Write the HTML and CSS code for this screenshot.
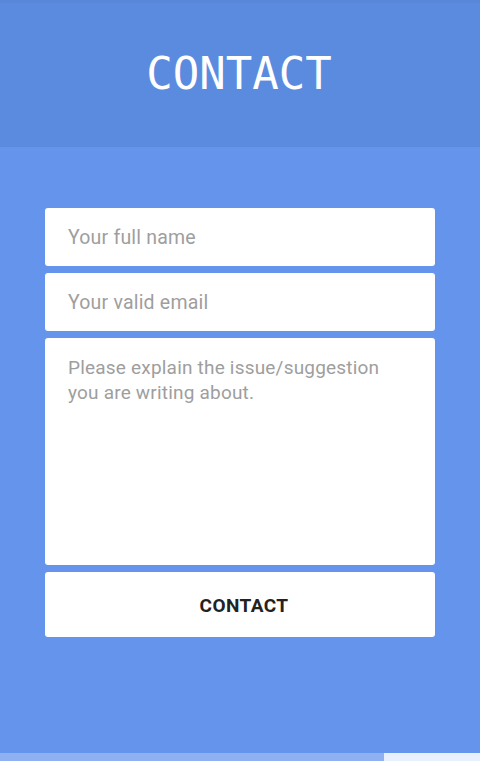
FILE: index.html
```html
<!DOCTYPE html>
<html>
<head>
<meta charset="utf-8">
<link rel="stylesheet" href="styles.css">
</head>
<body>
<div class="app">
  <header class="header">
    <h1 class="title">CONTACT</h1>
  </header>
  <main class="content">
    <form class="form">
      <input class="field" type="text" placeholder="Your full name">
      <input class="field" type="email" placeholder="Your valid email">
      <textarea class="field area" placeholder="Please explain the issue/suggestion you are writing about."></textarea>
      <button class="btn" type="button">CONTACT</button>
    </form>
  </main>
  <div class="progress">
    <div class="progress-fill"></div>
  </div>
</div>
</body>
</html>
```
FILE: styles.css
```css
* { box-sizing: border-box; }
html, body { margin: 0; padding: 0; height: 100%; }
body { background: #6494eb; font-family: Roboto, "Noto Sans", sans-serif; }
.app { display: flex; flex-direction: column; height: 761px; }
.header {
  height: 147px;
  background: #5b8bdf;
  border-top: 3px solid #5886d8;
  display: flex;
  align-items: center;
  justify-content: center;
}
.title {
  margin: 0;
  font-family: "DejaVu Sans Mono", monospace;
  font-weight: normal;
  font-size: 44px;
  color: #fff;
  padding-bottom: 4px;
  padding-right: 2px;
}
.content { flex: 1; padding: 61px 45px 0; }
.form { display: flex; flex-direction: column; gap: 7px; }
.field {
  border: none;
  outline: none;
  background: #fff;
  border-radius: 3px;
  height: 58px;
  padding: 0 23px;
  font-family: Roboto, sans-serif;
  font-size: 19.5px;
  letter-spacing: 0.2px;
  color: #333;
}
.field::placeholder { color: #9e9e9e; }
.area {
  height: 227px;
  padding: 17px 23px;
  resize: none;
  font-size: 19px;
  line-height: 25px;
}
.btn {
  height: 65px;
  border: none;
  border-radius: 3px;
  background: #fff;
  font-family: Roboto, sans-serif;
  font-weight: bold;
  font-size: 19px;
  color: #222;
  letter-spacing: 0.4px;
  padding: 2px 0 0 8px;
}
.progress { height: 8px; background: #e8f0fd; display: flex; }
.progress-fill { width: 384px; background: #8fb1f2; }
```
